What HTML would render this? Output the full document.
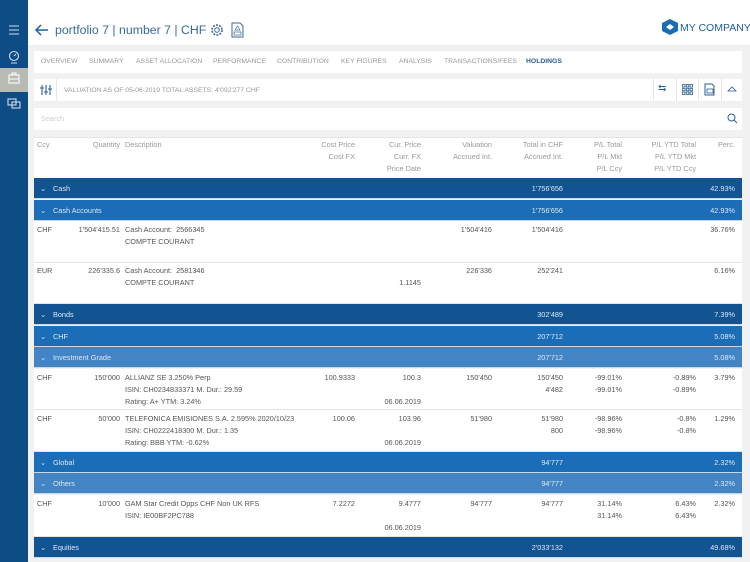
<!DOCTYPE html><html><head><style>
*{margin:0;padding:0;box-sizing:border-box}
body{width:750px;height:562px;overflow:hidden;background:#f1f1f1;font-family:"Liberation Sans",sans-serif;position:relative;color:#555}
.a{position:absolute;white-space:nowrap}
.t{font-size:7.3px;color:#555;line-height:12px}
.r{text-align:right}
.bar{position:absolute;left:34px;width:708px;height:21px;color:#dce8f4;font-size:7.3px;border-bottom:1px solid #c8d8ea}
.bar span{position:absolute;top:6px}
.d1{background:#125391}.d2{background:#1a6db6}.d3{background:#4385c4}
.row{position:absolute;left:34px;width:708px;background:#fff;border-bottom:1px solid #e4e4e4}
.box{position:absolute;left:34px;width:708px;background:#fff}
.h{color:#999}
.tab{font-size:6.8px}
</style></head><body>
<div class="a" style="left:0;top:0;width:750px;height:45px;background:#fff"></div>
<div class="a" style="left:0;top:0;width:28px;height:562px;background:#0e4c86"></div>
<div class="a" style="left:0;top:68px;width:28px;height:24px;background:#b7bbb4"></div>
<svg class="a" style="left:0;top:0" width="28" height="120">
<g stroke="#cfdcea" stroke-width="1.1" fill="none">
<path d="M9 26h10M9 30h10M9 34h10"/>
<circle cx="14" cy="56" r="4.5"/><path d="M14 56l2-2M11 63h6"/>
<rect x="9" y="75" width="10" height="8" stroke="#fff"/><path d="M12 75v-2h4v2M9 79h10" stroke="#fff"/>
<rect x="8" y="99" width="8" height="6"/><rect x="12" y="102" width="8" height="6"/>
</g></svg>
<svg class="a" style="left:34px;top:23px" width="16" height="14"><path d="M14 7H2M7 2L2 7l5 5" stroke="#1f5f9e" stroke-width="1.5" fill="none"/></svg>
<div class="a" style="left:55px;top:23px;font-size:12.3px;color:#3a6a9c">portfolio 7 | number 7 | CHF</div>
<svg class="a" style="left:209px;top:22px" width="16" height="16"><circle cx="8" cy="8" r="2.3" stroke="#3a6a9c" fill="none"/><circle cx="8" cy="8" r="5" stroke="#3a6a9c" stroke-dasharray="2 1.2" stroke-width="1.6" fill="none"/></svg>
<svg class="a" style="left:231px;top:22px" width="13" height="16"><path d="M1 1h8l3 3v11H1z" stroke="#3a6a9c" fill="none"/><path d="M4 8l2.5-4 2.5 4z" stroke="#3a6a9c" fill="none" stroke-width=".7"/><rect x="3" y="10" width="7" height="3" stroke="#3a6a9c" stroke-width=".7" fill="none"/></svg>
<svg class="a" style="left:661px;top:18px" width="18" height="18"><path d="M9 1l8 4v8l-8 4-8-4V5z" fill="#1b6db3"/><path d="M5 9l4-3 4 3-4 3z" fill="#fff"/></svg>
<div class="a" style="left:680px;top:22px;font-size:10.5px;color:#1f5f9e">MY COMPANY</div>
<div class="box" style="top:51px;height:22px"></div>
<div class="a t h tab" style="top:56px;left:41px">OVERVIEW</div>
<div class="a t h tab" style="top:56px;left:89px">SUMMARY</div>
<div class="a t h tab" style="top:56px;left:136px">ASSET ALLOCATION</div>
<div class="a t h tab" style="top:56px;left:213px">PERFORMANCE</div>
<div class="a t h tab" style="top:56px;left:277px">CONTRIBUTION</div>
<div class="a t h tab" style="top:56px;left:341px">KEY FIGURES</div>
<div class="a t h tab" style="top:56px;left:399px">ANALYSIS</div>
<div class="a t h tab" style="top:56px;left:444px">TRANSACTIONS/FEES</div>
<div class="a t tab" style="top:56px;left:526px;color:#2a5f96;font-weight:bold">HOLDINGS</div>
<div class="box" style="top:79px;height:22px"></div>
<div class="a" style="left:56px;top:79px;width:1px;height:22px;background:#e6e6e6"></div>
<svg class="a" style="left:40px;top:84px" width="12" height="12"><path d="M2 1v10M6 1v10M10 1v10M0 4h4M4 8h4M8 5h4" stroke="#2a5f96" stroke-width="1.1"/></svg>
<div class="a t h tab" style="left:64px;top:85px">VALUATION AS OF 05-06-2019 TOTAL ASSETS: 4'092'277 CHF</div>
<div class="a" style="left:653px;top:79px;width:1px;height:22px;background:#e6e6e6"></div>
<div class="a" style="left:676px;top:79px;width:1px;height:22px;background:#e6e6e6"></div>
<div class="a" style="left:698px;top:79px;width:1px;height:22px;background:#e6e6e6"></div>
<div class="a" style="left:721px;top:79px;width:1px;height:22px;background:#e6e6e6"></div>
<div class="a" style="left:658px;top:83px;font-size:10px;color:#2a5f96">⇆</div>
<svg class="a" style="left:682px;top:84px" width="11" height="11"><g fill="none" stroke="#2a5f96" stroke-width=".8"><rect x=".5" y=".5" width="2.5" height="2.5"/><rect x="4.3" y=".5" width="2.5" height="2.5"/><rect x="8" y=".5" width="2.5" height="2.5"/><rect x=".5" y="4.3" width="2.5" height="2.5"/><rect x="4.3" y="4.3" width="2.5" height="2.5"/><rect x="8" y="4.3" width="2.5" height="2.5"/><rect x=".5" y="8" width="2.5" height="2.5"/><rect x="4.3" y="8" width="2.5" height="2.5"/><rect x="8" y="8" width="2.5" height="2.5"/></g></svg>
<svg class="a" style="left:704px;top:83px" width="11" height="13"><path d="M1 1h7l2 2v9H1z" stroke="#2a5f96" fill="none"/><rect x="3" y="6" width="6" height="4" stroke="#2a5f96" fill="none" stroke-width=".8"/></svg>
<svg class="a" style="left:727px;top:86px" width="10" height="6"><path d="M1 5l4-4 4 4z" stroke="#2a5f96" fill="none" stroke-width=".8"/></svg>
<div class="box" style="top:108px;height:22px"></div>
<div class="a t" style="left:41px;top:113px;color:#ccc">Search</div>
<svg class="a" style="left:727px;top:113px" width="11" height="11"><circle cx="4.5" cy="4.5" r="3.5" stroke="#2a5f96" fill="none"/><path d="M7 7l3 3" stroke="#2a5f96"/></svg>
<div class="box" style="top:137px;height:41px;border-top:1px solid #e4e4e4"></div>
<div class="a t h" style="left:37px;top:139px">Ccy</div>
<div class="a t h r" style="right:630px;top:139px">Quantity</div>
<div class="a t h" style="left:125px;top:139px">Description</div>
<div class="a t h r" style="right:395px;top:139px">Cost Price<br>Cost FX</div>
<div class="a t h r" style="right:329px;top:139px">Cur. Price<br>Curr. FX<br>Price Date</div>
<div class="a t h r" style="right:258px;top:139px">Valuation<br>Accrued Int.</div>
<div class="a t h r" style="right:187px;top:139px">Total in CHF<br>Accrued Int.</div>
<div class="a t h r" style="right:128px;top:139px">P/L Total<br>P/L Mkt<br>P/L Ccy</div>
<div class="a t h r" style="right:54px;top:139px">P/L YTD Total<br>P/L YTD Mkt<br>P/L YTD Ccy</div>
<div class="a t h r" style="right:15px;top:139px">Perc.</div>

<div class="bar d1" style="top:178px"><span style="left:6px">⌄</span><span style="left:19px">Cash</span><span style="right:179px">1'756'656</span><span style="right:7px">42.93%</span></div>
<div class="bar d2" style="top:200px"><span style="left:6px">⌄</span><span style="left:19px">Cash Accounts</span><span style="right:179px">1'756'656</span><span style="right:7px">42.93%</span></div>
<div class="row" style="top:221px;height:42px"></div>
<div class="a t" style="left:37px;top:224px">CHF</div>
<div class="a t r" style="right:630px;top:224px">1'504'415.51</div>
<div class="a t" style="left:125px;top:224px">Cash Account:&nbsp; 2566345<br>COMPTE COURANT</div>
<div class="a t r" style="right:258px;top:224px">1'504'416</div>
<div class="a t r" style="right:187px;top:224px">1'504'416</div>
<div class="a t r" style="right:15px;top:224px">36.76%</div>
<div class="row" style="top:263px;height:41px"></div>
<div class="a t" style="left:37px;top:265px">EUR</div>
<div class="a t r" style="right:630px;top:265px">226'335.6</div>
<div class="a t" style="left:125px;top:265px">Cash Account:&nbsp; 2581346<br>COMPTE COURANT</div>
<div class="a t r" style="right:329px;top:277px">1.1145</div>
<div class="a t r" style="right:258px;top:265px">226'336</div>
<div class="a t r" style="right:187px;top:265px">252'241</div>
<div class="a t r" style="right:15px;top:265px">6.16%</div>

<div class="bar d1" style="top:304px"><span style="left:6px">⌄</span><span style="left:19px">Bonds</span><span style="right:179px">302'489</span><span style="right:7px">7.39%</span></div>
<div class="bar d2" style="top:326px"><span style="left:6px">⌄</span><span style="left:19px">CHF</span><span style="right:179px">207'712</span><span style="right:7px">5.08%</span></div>
<div class="bar d3" style="top:347px"><span style="left:6px">⌄</span><span style="left:19px">Investment Grade</span><span style="right:179px">207'712</span><span style="right:7px">5.08%</span></div>
<div class="row" style="top:369px;height:41px"></div>
<div class="a t" style="left:37px;top:372px">CHF</div>
<div class="a t r" style="right:630px;top:372px">150'000</div>
<div class="a t" style="left:125px;top:372px">ALLIANZ SE 3.250% Perp<br>ISIN: CH0234833371 M. Dur.: 29.59<br>Rating: A+ YTM: 3.24%</div>
<div class="a t r" style="right:395px;top:372px">100.9333</div>
<div class="a t r" style="right:329px;top:372px">100.3<br>&nbsp;<br>06.06.2019</div>
<div class="a t r" style="right:258px;top:372px">150'450</div>
<div class="a t r" style="right:187px;top:372px">150'450<br>4'482</div>
<div class="a t r" style="right:128px;top:372px">-99.01%<br>-99.01%</div>
<div class="a t r" style="right:54px;top:372px">-0.89%<br>-0.89%</div>
<div class="a t r" style="right:15px;top:372px">3.79%</div>
<div class="row" style="top:410px;height:42px"></div>
<div class="a t" style="left:37px;top:413px">CHF</div>
<div class="a t r" style="right:630px;top:413px">50'000</div>
<div class="a t" style="left:125px;top:413px">TELEFONICA EMISIONES S.A. 2.595% 2020/10/23<br>ISIN: CH0222418300 M. Dur.: 1.35<br>Rating: BBB YTM: -0.62%</div>
<div class="a t r" style="right:395px;top:413px">100.06</div>
<div class="a t r" style="right:329px;top:413px">103.96<br>&nbsp;<br>06.06.2019</div>
<div class="a t r" style="right:258px;top:413px">51'980</div>
<div class="a t r" style="right:187px;top:413px">51'980<br>800</div>
<div class="a t r" style="right:128px;top:413px">-98.96%<br>-98.96%</div>
<div class="a t r" style="right:54px;top:413px">-0.8%<br>-0.8%</div>
<div class="a t r" style="right:15px;top:413px">1.29%</div>

<div class="bar d2" style="top:452px"><span style="left:6px">⌄</span><span style="left:19px">Global</span><span style="right:179px">94'777</span><span style="right:7px">2.32%</span></div>
<div class="bar d3" style="top:473px"><span style="left:6px">⌄</span><span style="left:19px">Others</span><span style="right:179px">94'777</span><span style="right:7px">2.32%</span></div>
<div class="row" style="top:495px;height:42px"></div>
<div class="a t" style="left:37px;top:498px">CHF</div>
<div class="a t r" style="right:630px;top:498px">10'000</div>
<div class="a t" style="left:125px;top:498px">GAM Star Credit Opps CHF Non UK RFS<br>ISIN: IE00BF2PC788</div>
<div class="a t r" style="right:395px;top:498px">7.2272</div>
<div class="a t r" style="right:329px;top:498px">9.4777<br>&nbsp;<br>06.06.2019</div>
<div class="a t r" style="right:258px;top:498px">94'777</div>
<div class="a t r" style="right:187px;top:498px">94'777</div>
<div class="a t r" style="right:128px;top:498px">31.14%<br>31.14%</div>
<div class="a t r" style="right:54px;top:498px">6.43%<br>6.43%</div>
<div class="a t r" style="right:15px;top:498px">2.32%</div>
<div class="bar d1" style="top:537px"><span style="left:6px">⌄</span><span style="left:19px">Equities</span><span style="right:179px">2'033'132</span><span style="right:7px">49.68%</span></div>
</body></html>
